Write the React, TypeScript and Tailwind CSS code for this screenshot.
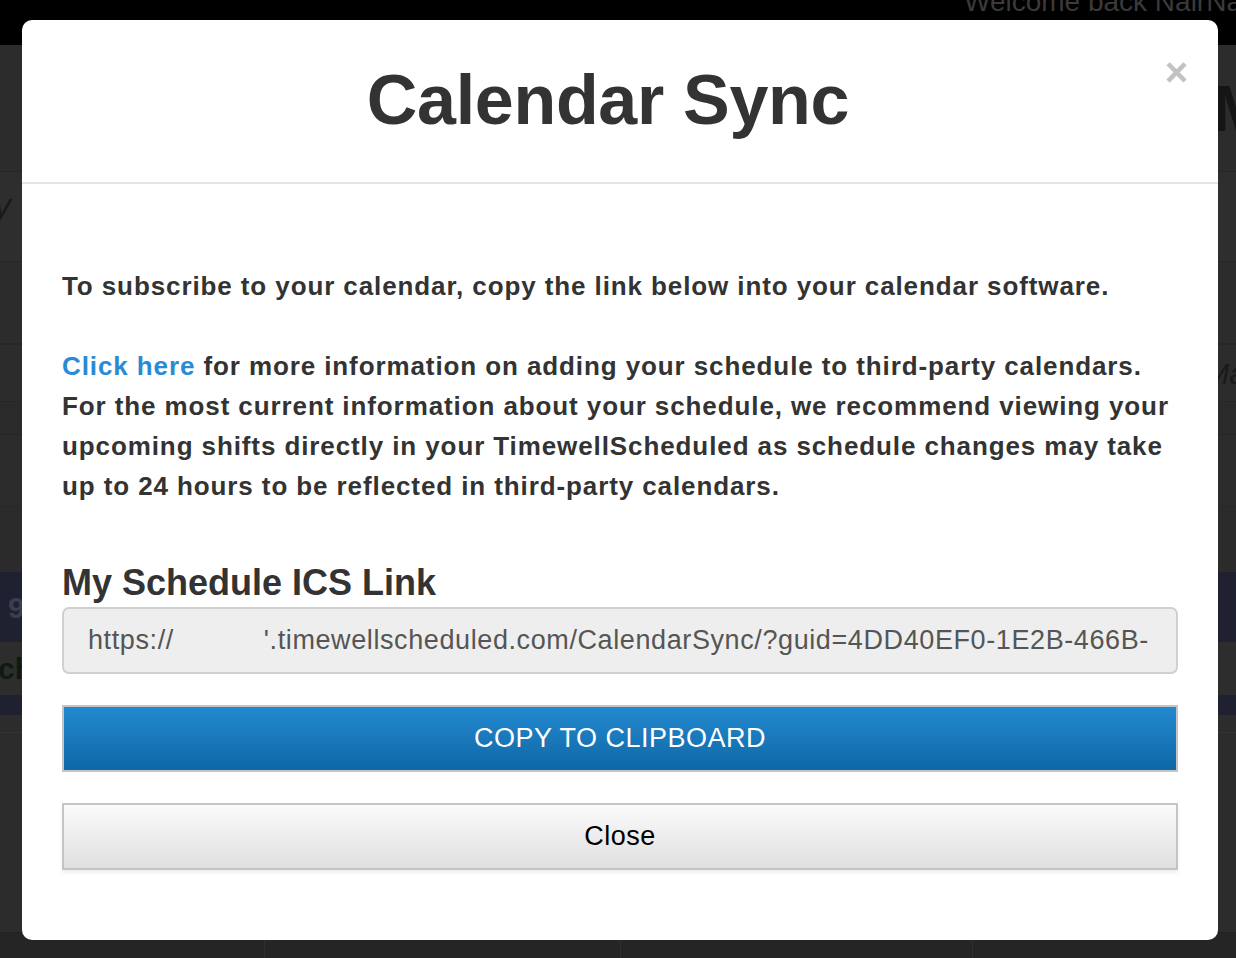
import React from 'react';

const font = { fontFamily: '"Liberation Sans", Arial, sans-serif' };

const BackgroundPage = () => (
  <div className="flex h-full flex-col">
    <div className="flex h-[45px] shrink-0 justify-end overflow-hidden bg-black">
      <span className="-mt-[14px] mr-[-6px] whitespace-nowrap text-[28px] leading-[32px] text-[#3a3a3a]">
        Welcome back NairNa
      </span>
    </div>
    <div className="flex flex-1 flex-col bg-[#2c2c2c]">
      <div className="flex h-[127px] items-end justify-end border-b border-[#272727] pb-[30px]">
        <span className="mr-[-30px] text-[64px] font-bold leading-none text-[#151515]">AM</span>
      </div>
      <div className="flex h-[90px] items-start border-b border-[#262626] bg-[#2e2e2e] pt-[8px]">
        <span className="ml-[-6px] text-[34px] italic text-[#1a1a1a]">y</span>
      </div>
      <div className="h-[83px] border-b-2 border-[#262626]" />
      <div className="flex h-[57px] items-center justify-end border-b border-[#262626]">
        <span className="mr-[-10px] text-[30px] italic text-[#1a1a1a]">Ma</span>
      </div>
      <div className="h-[33px] border-b border-[#262626] bg-[#2a2a2a]" />
      <div className="h-[72px] border-b border-[#282828]" />
      <div className="h-[65px] bg-[#2b2b2b]" />
      <div className="flex h-[70px] items-center bg-[#1f2130]">
        <span className="ml-[8px] text-[30px] font-bold text-[#3b3e4c]">9</span>
      </div>
      <div className="flex h-[53px] items-center bg-[#2d2d2d]">
        <span className="ml-[-2px] text-[30px] font-bold text-[#0f1a10]">che</span>
      </div>
      <div className="h-[20px] bg-[#1f2130]" />
      <div className="h-[18px] border-b border-[#333]" />
      <div className="h-[200px] border-b border-[#222]" />
      <div className="flex flex-1 bg-[#252525]">
        <div className="w-[265px] border-r border-[#2f2f2f]" />
        <div className="w-[356px] border-r border-[#2f2f2f]" />
        <div className="w-[352px] border-r border-[#2f2f2f]" />
      </div>
    </div>
  </div>
);

export default function App() {
  return (
    <div className="relative h-[958px] w-[1236px] overflow-hidden bg-[#2b2b2b]" style={font}>
      <BackgroundPage />

      <div className="absolute left-[22px] top-[20px] flex h-[920px] w-[1196px] flex-col rounded-[10px] bg-white">
        <div className="relative flex h-[164px] shrink-0 items-center justify-center border-b-2 border-[#e5e5e5] pr-[24px]">
          <h1 className="mt-[-2px] text-[70px] font-bold leading-none tracking-[-0.3px] text-[#333333]">
            Calendar Sync
          </h1>
          <button className="absolute right-[30px] top-[32px] text-[40px] font-bold leading-none text-[#c2c2c2]">
            ×
          </button>
        </div>

        <div className="flex flex-col px-[40px] pt-[82px] text-[#333333]">
          <p className="whitespace-nowrap text-[26px] font-bold leading-[40px] tracking-[0.9px]">
            To subscribe to your calendar, copy the link below into your calendar software.
          </p>
          <p className="mt-[40px] whitespace-nowrap text-[26px] font-bold leading-[40px] tracking-[0.9px]">
            <a className="text-[#2a8bd5]">Click here</a> for more information on adding your schedule to
            third-party calendars.
            <br />
            For the most current information about your schedule, we recommend viewing your
            <br />
            upcoming shifts directly in your TimewellScheduled as schedule changes may take
            <br />
            up to 24 hours to be reflected in third-party calendars.
          </p>

          <h2 className="mt-[57px] text-[36px] font-bold leading-[40px]">My Schedule ICS Link</h2>
          <div className="mt-[4px] flex h-[67px] items-center overflow-hidden whitespace-nowrap rounded-[7px] border-2 border-[#d0d0d0] bg-[#eeeeee] px-[24px] text-[27px] tracking-[0.6px] text-[#555555]">
            <span>https://</span>
            <span className="inline-block w-[90px]" />
            <span>'.timewellscheduled.com/CalendarSync/?guid=4DD40EF0-1E2B-466B-</span>
          </div>

          <button className="mt-[31px] h-[67px] w-full border-2 border-[#c4c4c4] bg-linear-to-b from-[#2389d0] to-[#0e68a6] text-[27px] tracking-[0.5px] text-white">
            COPY TO CLIPBOARD
          </button>
          <button className="mt-[31px] h-[67px] w-full border-2 border-[#c4c4c4] bg-linear-to-b from-[#fbfbfb] to-[#dfdfdf] text-[27px] tracking-[0.5px] text-black shadow-[0_3px_3px_rgba(0,0,0,0.06)]">
            Close
          </button>
        </div>
      </div>
    </div>
  );
}
